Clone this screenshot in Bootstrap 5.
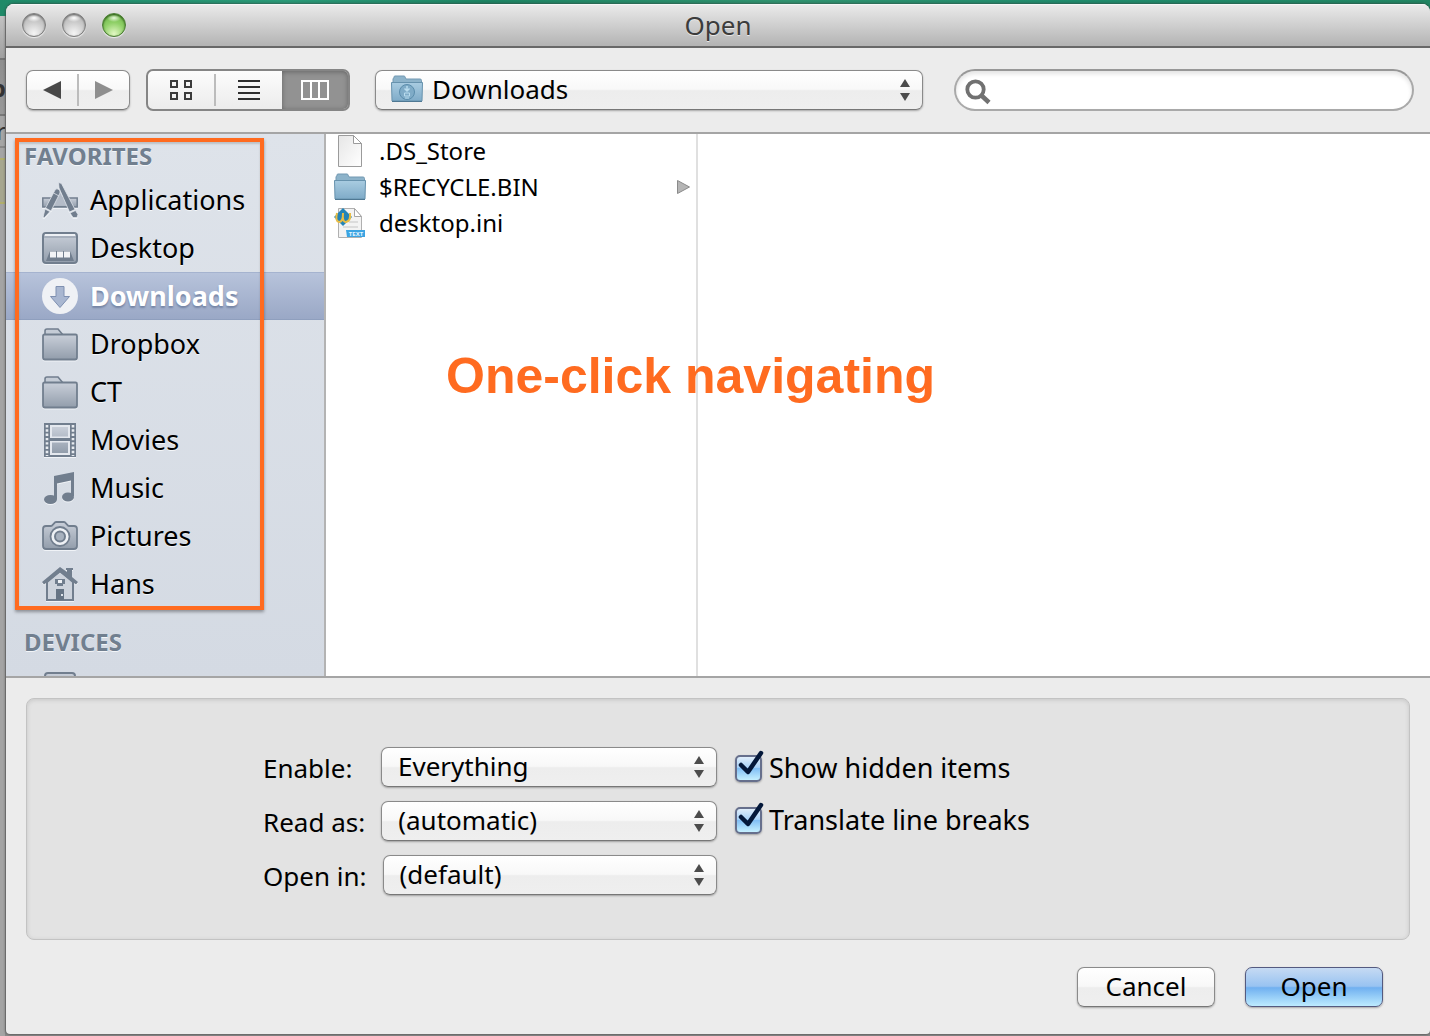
<!DOCTYPE html>
<html lang="en">
<head>
<meta charset="utf-8">
<meta name="viewport" content="width=device-width, initial-scale=1">
<title>Open</title>
<link href="https://cdn.jsdelivr.net/npm/bootstrap@5.3.0/dist/css/bootstrap.min.css" rel="stylesheet">
<style>
  body { font-family: "Noto Sans", "Open Sans", sans-serif; font-size: 26px; line-height: 36px; color: #000; background: #7b7b7b; }
  button, select, input { font-family: inherit; color: #000; }
  .desk { height: 100vh; min-height: 900px; background: linear-gradient(90deg, #1f8a68, #2a9a78 20%, #1d8463 34%, #30936f 55%, #1f8b6c 75%, #218562) top / 100% 16px no-repeat, #8c8c8c; }
  /* edge of the window behind */
  .behind { width: 6px; font-weight: 700; font-size: 24px; line-height: 36px; color: #333; margin-top: 16px; background: #a4a4a4; border-right: 1px solid #8a8a8a; }
  .behind-cap { height: 44px; background: linear-gradient(#c2c2c2, #a0a0a0); border-bottom: 2px solid #757575; }
  .behind-tab { height: 56px; background: linear-gradient(#8e8e8e, #989898); border-bottom: 2px solid #777; padding-top: 10px; }
  .behind-bar { height: 32px; background: #a5a5a5; border-bottom: 2px solid #888; line-height: 30px; font-weight: 400; }
  .behind-note { height: 46px; margin-top: 10px; background: #a6a68f; border: solid #b0ae6c; border-width: 2px 0; }
  .behind span { display: block; direction: rtl; width: 6px; }

  .dialog-win { margin: 4px 0 2px; background: #ececec; border-radius: 8px 8px 4px 4px; box-shadow: 0 0 3px #333; min-width: 0; overflow: hidden; }
  .titlebar { height: 44px; background: linear-gradient(#ebebeb, #d2d2d2 45%, #b3b3b3); border-bottom: 2px solid #686868; box-shadow: inset 0 1px #f6f6f6; color: #3c3c3c; text-shadow: 0 1px #e8e8e8; }
  .lights { left: 16px; gap: 16px; }
  .light { width: 24px; height: 24px; border-radius: 50%; border: 1px solid #7d7d7d; box-shadow: 0 1px 1px #eee, inset 0 1px 2px #666; background: radial-gradient(ellipse 7px 4px at 50% 18%, #fff, transparent), radial-gradient(circle at 50% 88%, #f5f5f5, #c8c8c8 55%, #b4b4b4); }
  .light-go { border-color: #4a7d33; box-shadow: 0 1px 1px #eee, inset 0 1px 2px #24500f; background: radial-gradient(ellipse 7px 4px at 50% 18%, #e8f8dc, transparent), radial-gradient(circle at 50% 90%, #e2f8c4, #8fd067 50%, #67b045); }

  .toolbar { height: 86px; padding: 0 16px 0 20px; border-bottom: 2px solid #a5a5a5; }
  .aqua { height: 40px; border: 1px solid #8a8a8a; border-bottom-color: #777; border-radius: 7px; background: linear-gradient(#fff, #f8f8f8 48%, #ededed 52%, #efefef); box-shadow: 0 1px 2px rgba(0,0,0,.3); }
  .nav-pair { width: 104px; margin-right: 16px; }
  .view-set { width: 204px; height: 42px; margin-right: 25px; border: 2px solid #858585; border-radius: 7px; background: linear-gradient(#fcfcfc, #ececec); }
  .plain { border: 0; background: none; padding: 0; }
  .split { width: 2px; height: 32px; background: #bcbcbc; }
  .view-set .plain { flex: 1 1 0; }
  .view-on { background: #929292; box-shadow: inset 0 1px 5px #666; border-radius: 0 5px 5px 0; }
  .pop { width: 100%; appearance: none; padding: 0 44px 2px 16px; font-size: 26px; line-height: 36px; display: block; }
  .pop-place { padding-left: 56px; }
  .pop-arrows { right: 12px; top: 8px; pointer-events: none; }
  .place-icon { left: 16px; top: 5px; pointer-events: none; }
  .place { flex: 548 1 0; margin-right: 31px; }
  .finder { flex: 460 1 0; }
  .finder input { width: 100%; height: 42px; border: 2px solid #a9a9a9; border-top-color: #979797; border-radius: 21px; padding: 0 20px 0 48px; background: #fff; box-shadow: inset 0 3px 4px #e4e4e4; display: block; }
  .finder svg { left: 10px; top: 9px; pointer-events: none; }

  .browser { flex: 1 1 0; min-height: 0; border-bottom: 2px solid #a5a5a5; background: #fff; }
  .sidebar { width: 320px; flex: none; background: linear-gradient(#dee3ea, #d4dae3); border-right: 2px solid #b3b3b3; text-shadow: 0 1px #f3f6f9; font-size: 27px; }
  .side-head { font-size: 24px; line-height: 36px; font-weight: 700; color: #717f8f; padding: 4px 0 2px 18px; margin: 0; }
  .side-head-next { margin-top: 12px; }
  .side-link { height: 48px; padding-left: 36px; gap: 12px; color: #000; text-decoration: none; }
  .side-link svg { flex: none; filter: drop-shadow(0 1px 0 #f0f3f7); }
  .side-on { background: linear-gradient(#b7c3db, #9aa8c6); border-top: 1px solid #a5b3cf; border-bottom: 1px solid #8f9fbe; color: #fff; font-weight: 700; text-shadow: 0 2px 2px #7484a4; }
  .side-on svg { filter: none; }
  .marker-box { left: 9px; top: 4px; width: 249px; height: 472px; border: 4px solid #ff6b20; box-shadow: 0 2px 3px rgba(0,0,0,.35), inset 0 2px 2px rgba(0,0,0,.15); pointer-events: none; }
  .marker-text { left: 440px; top: 212px; font: 700 50px/60px "Liberation Sans", Arial, sans-serif; color: #ff6b20; }
  .files { width: 372px; flex: none; border-right: 2px solid #e0e0e0; font-size: 24px; }
  .file-row { height: 36px; padding: 0 6px 2px 8px; gap: 13px; color: #000; text-decoration: none; }
  .file-row svg { flex: none; }

  .options { margin: 20px 20px 0; height: 242px; padding: 48px 0 0 236px; background: #e3e3e3; border: 1px solid #c3c3c3; border-radius: 8px; box-shadow: inset 0 1px 4px #c6c6c6; gap: 18px; }
  .opt-pops { width: 454px; gap: 14px; }
  .opt-pops label { min-width: 118px; padding: 2px 16px 0 0; white-space: nowrap; }
  .opt-ticks { gap: 16px; padding-top: 3px; font-size: 27px; }
  .tick { gap: 7px; height: 36px; }
  .tick input { appearance: none; width: 27px; height: 27px; margin: 0; border: 2px solid #666f8c; border-radius: 5px; background: linear-gradient(#e0eefb, #a9d2f8 45%, #82bff5 50%, #c5f0ff); box-shadow: 0 1px 2px rgba(0,0,0,.3); display: block; }
  .tick svg { left: 2px; top: -5px; pointer-events: none; }
  .foot { padding: 27px 47px 27px 0; gap: 30px; }
  .foot button { width: 138px; padding: 0 0 2px; line-height: 36px; }
  .foot .go { border-color: #545a80; background: linear-gradient(#c6daf3, #98c3f1 48%, #70b0f0 52%, #bdebff); }
</style>
<script src="https://cdn.jsdelivr.net/npm/bootstrap@5.3.0/dist/js/bootstrap.bundle.min.js"></script>
</head>
<body>
<svg width="0" height="0" class="position-absolute" aria-hidden="true">
  <defs>
    <linearGradient id="slate" x2="0" y2="1"><stop stop-color="#c9cfd9"/><stop offset="1" stop-color="#929dab"/></linearGradient>
    <linearGradient id="blue" x2="0" y2="1"><stop stop-color="#a9cce1"/><stop offset="1" stop-color="#7fabc8"/></linearGradient>
    <linearGradient id="paper" x2="1" y2="1"><stop stop-color="#e6e6e6"/><stop offset="1" stop-color="#fff"/></linearGradient>
    <symbol id="arrows" viewBox="0 0 12 24"><path d="M6 1l5 8H1zM6 23l5-8H1z" fill="#4c4c4c"/></symbol>
    <symbol id="folder" viewBox="0 0 36 34"><path d="M3 8V4q0-2 2-2h11l5 6" fill="#c5ccd6" stroke="#717e8e" stroke-width="1.6"/><path d="M1 9q0-1.500 1.500-1.500h31q1.500 0 1.500 1.500v21.500q0 2-2 2H3q-2 0-2-2z" fill="url(#slate)" stroke="#717e8e" stroke-width="1.800"/></symbol>
    <symbol id="bluefolder" viewBox="0 0 32 28"><path d="M2 7V4q0-1 1-1V2q0-1 1-1h9q1 0 1 1l1 2h14q1.500 0 1.500 1.500V10H2z" fill="#8db3ca" stroke="#7399b2"/><path d="M.5 7.500h31L31 26H1z" fill="url(#blue)" stroke="#6792ad"/><path d="M1 26.500h30" stroke="#4f7893"/></symbol>
  </defs>
</svg>

<div class="desk d-flex">
  <div class="behind flex-shrink-0 overflow-hidden" aria-hidden="true">
    <div class="behind-cap"></div>
    <div class="behind-tab"><span>p</span></div>
    <div class="behind-bar"><span>r</span></div>
    <div class="behind-note"></div>
  </div>

  <main class="dialog-win flex-grow-1 d-flex flex-column">
    <header class="titlebar position-relative d-flex align-items-center justify-content-center flex-shrink-0">
      <div class="lights position-absolute d-flex">
        <button class="light p-0" type="button" aria-label="Close"></button>
        <button class="light p-0" type="button" aria-label="Minimize"></button>
        <button class="light light-go p-0" type="button" aria-label="Zoom"></button>
      </div>
      <span>Open</span>
    </header>

    <div class="toolbar d-flex align-items-center flex-shrink-0">
      <div class="nav-pair aqua d-flex align-items-center flex-shrink-0">
        <button class="plain flex-fill h-100 d-flex align-items-center justify-content-center" type="button" aria-label="Back"><svg width="18" height="20" viewBox="0 0 18 20"><path d="M0 10L18 1v18z" fill="#484848"/></svg></button>
        <span class="split"></span>
        <button class="plain flex-fill h-100 d-flex align-items-center justify-content-center" type="button" aria-label="Forward"><svg width="18" height="20" viewBox="0 0 18 20"><path d="M18 10L0 1v18z" fill="#8e8e8e"/></svg></button>
      </div>
      <div class="view-set d-flex align-items-center flex-shrink-0">
        <button class="plain h-100 d-flex align-items-center justify-content-center" type="button" aria-label="Icons"><svg width="24" height="22" viewBox="0 0 24 22" fill="none" stroke="#3b3b3b" stroke-width="2"><path d="M2 2h6v6H2zM16 2h6v6h-6zM2 14h6v6H2zM16 14h6v6h-6z"/></svg></button>
        <span class="split"></span>
        <button class="plain h-100 d-flex align-items-center justify-content-center" type="button" aria-label="List"><svg width="22" height="20" viewBox="0 0 22 20" stroke="#2e2e2e" stroke-width="2"><path d="M0 1h22M0 7h22M0 13h22M0 19h22"/></svg></button>
        <button class="plain view-on h-100 d-flex align-items-center justify-content-center" type="button" aria-label="Columns"><svg width="28" height="22" viewBox="0 0 28 22" fill="none" stroke="#fff" stroke-width="2"><path d="M1 2h26v18H1zM10 2v18M18 2v18"/></svg></button>
      </div>
      <div class="place position-relative">
        <select class="aqua pop pop-place" aria-label="Folder"><option>Downloads</option></select>
        <svg class="place-icon position-absolute" width="32" height="28" viewBox="0 0 32 28"><use href="#bluefolder"/><circle cx="16" cy="17" r="7.500" fill="#7fabc7" stroke="#5b8dac"/><path d="M16 11v4M13.500 13.500L16 16l2.500-2.500" stroke="#b9dcee" fill="none" stroke-width="1.500"/><path d="M13.500 18h5v3h-5zM14 23h4" stroke="#b9dcee" fill="none"/></svg>
        <svg class="pop-arrows position-absolute" width="12" height="24"><use href="#arrows"/></svg>
      </div>
      <div class="finder position-relative">
        <input type="search" aria-label="Search">
        <svg class="position-absolute" width="28" height="28" viewBox="0 0 28 28" fill="none" stroke="#717171"><circle cx="11.500" cy="11.500" r="8.200" stroke-width="3.800"/><path d="M17.500 17.500l7.500 7" stroke-width="4.500"/></svg>
      </div>
    </div>

    <div class="browser position-relative d-flex overflow-hidden">
      <nav class="sidebar overflow-hidden">
        <h2 class="side-head">FAVORITES</h2>
        <a class="side-link d-flex align-items-center" href="#"><svg width="36" height="36" viewBox="0 0 36 36"><path d="M.8 16h34.400v9H.8z" fill="url(#slate)" stroke="#717e8e" stroke-width="1.500"/><path d="M17.500 9L9 25.500h17z" fill="#b4bcc8"/><path d="M11 24.700h16" stroke="#717e8e" stroke-width="1.500"/><g stroke="#dee3ea" stroke-width=".8" fill="#717e8e"><path d="M12.500 9q.8-3 3.500-2t2 4L9 29l-5.500-3z"/><path d="M3 27l5 2.600-5.500 5.900H1z"/><path d="M11.500 11l5.500 3" fill="none"/><path d="M16.500.500l3 1L33 27.500l-5.500 2.500L17 6z"/><path d="M28 31l5.500-2.500 2.500 4-1 3h-4z"/></g></svg><span>Applications</span></a>
        <a class="side-link d-flex align-items-center" href="#"><svg width="36" height="34" viewBox="0 0 36 34"><rect x="1" y="2" width="34" height="30" rx="3" fill="url(#slate)" stroke="#717e8e" stroke-width="2"/><path d="M3 4h30" stroke="#edf0f4" stroke-width="2"/><path d="M2 6h32" stroke="#8a95a4"/><path d="M8 20h20l4 10H4z" fill="#717e8e"/><path d="M8 20.500h6v6H8zM15 20.500h6v6h-6zM22 20.500h6v6h-6z" fill="#f2f4f7"/></svg><span>Desktop</span></a>
        <a class="side-link side-on d-flex align-items-center" href="#" aria-current="page"><svg width="36" height="36" viewBox="0 0 36 36"><circle cx="18" cy="18" r="18" fill="#eff1f5"/><path d="M14 8.500h8v10h5.500L18 29.500 8.500 18.500H14z" fill="#a9b7d1" stroke="#7f90b1"/></svg><span>Downloads</span></a>
        <a class="side-link d-flex align-items-center" href="#"><svg width="36" height="34"><use href="#folder"/></svg><span>Dropbox</span></a>
        <a class="side-link d-flex align-items-center" href="#"><svg width="36" height="34"><use href="#folder"/></svg><span>CT</span></a>
        <a class="side-link d-flex align-items-center" href="#"><svg width="36" height="36" viewBox="0 0 36 36"><path d="M2 1h32v34H2z" fill="#717e8e"/><path d="M8 3h20v13H8zM8 19h20v14H8z" fill="#e4e8ee"/><path d="M10 5h16v9.500H10zM10 20.500h16V31H10z" fill="url(#slate)"/><path d="M5 3v31M31 3v31" stroke="#e7ebf0" stroke-width="2.600" stroke-dasharray="2.400 1.900"/></svg><span>Movies</span></a>
        <a class="side-link d-flex align-items-center" href="#"><svg width="36" height="36" viewBox="0 0 36 36" fill="#717e8e"><path d="M12 6l20-4v24h-3V10.500L15 13.500V29h-3z"/><ellipse cx="8.500" cy="29.500" rx="6.500" ry="4.500"/><ellipse cx="26" cy="27" rx="6" ry="4.500"/></svg><span>Music</span></a>
        <a class="side-link d-flex align-items-center" href="#"><svg width="36" height="30" viewBox="0 0 36 30"><path d="M4 5h5q1 0 2-1.500l1-1Q13 1 14 1h8q1 0 2 1.500l1 1Q26 5 27 5h5q3 0 3 3v17q0 3-3 3H4q-3 0-3-3V8q0-3 3-3z" fill="url(#slate)" stroke="#717e8e" stroke-width="1.800"/><circle cx="18" cy="15.500" r="9.500" fill="#eef1f5" stroke="#717e8e" stroke-width="1.800"/><circle cx="18" cy="15.500" r="5" fill="#a7b1be" stroke="#717e8e" stroke-width="2"/></svg><span>Pictures</span></a>
        <a class="side-link d-flex align-items-center" href="#"><svg width="36" height="36" viewBox="0 0 36 36"><path d="M5 16L18 5l13 11v18H5z" fill="#cdd3dc" stroke="#717e8e" stroke-width="2"/><path d="M18 1l7 5V4h-1V2h7v2h-1v7l6 5-2 2.500L18 6.500 2 18.500 0 16z" fill="#717e8e"/><path d="M13 13h10v5h-2v2h-6v-2h-2z" fill="#717e8e"/><path d="M16 14h4v3h-4z" fill="#eef1f5"/><path d="M14 23h8v11h-8z" fill="#667484"/><path d="M19 28h2v2h-2z" fill="#dfe4ea"/></svg><span>Hans</span></a>
        <h2 class="side-head side-head-next">DEVICES</h2>
        <a class="side-link d-flex align-items-center" href="#" aria-label="Device"><svg width="36" height="28" viewBox="0 0 36 28"><rect x="3" y="1" width="30" height="26" rx="3" fill="url(#slate)" stroke="#717e8e" stroke-width="2"/></svg></a>
      </nav>

      <div class="files">
        <a class="file-row d-flex align-items-center" href="#"><svg width="32" height="32" viewBox="0 0 32 32"><path d="M4.500.500h15l8 8v23h-23z" fill="url(#paper)" stroke="#9b9b9b"/><path d="M19.500.500v8h8z" fill="#fff" stroke="#9b9b9b"/></svg><span>.DS_Store</span></a>
        <a class="file-row d-flex align-items-center" href="#"><svg width="32" height="28"><use href="#bluefolder"/></svg><span class="flex-grow-1">$RECYCLE.BIN</span><svg width="13" height="14" viewBox="0 0 13 14"><path d="M.5.500v13L12.500 7z" fill="#b5b5b5" stroke="#8a8a8a"/></svg></a>
        <a class="file-row d-flex align-items-center" href="#"><svg width="32" height="32" viewBox="0 0 32 32"><path d="M4.500 1.500h16l7 8v21h-23z" fill="#f3f3f3" stroke="#b0b0b0"/><path d="M20.500 1.500v8h7z" fill="#fff" stroke="#a5a5a5"/><path d="M15 15h9M9 20h15" stroke="#dcdcdc" stroke-width="2"/><path d="M9 1l9 9-9 9-9-9z" fill="#2384b8"/><path d="M3 6q-2 8 2 9 4 0 4-9-1 9 3 9 5-1 4-9" fill="none" stroke="#e9bd45" stroke-width="2"/><path d="M12 23h19v7H13z" fill="#3ba4e2"/><text x="22" y="29" text-anchor="middle" font-size="6" font-weight="700" fill="#e3f5ff">TEXT</text></svg><span>desktop.ini</span></a>
      </div>
      <div class="flex-grow-1"></div>
      <div class="marker-box position-absolute"></div>
      <div class="marker-text position-absolute text-nowrap">One-click navigating</div>
    </div>

    <section class="options d-flex flex-shrink-0">
      <div class="opt-pops d-flex flex-column">
        <div class="d-flex align-items-center"><label for="enable">Enable:</label><div class="position-relative flex-grow-1"><select id="enable" class="aqua pop"><option>Everything</option></select><svg class="pop-arrows position-absolute" width="12" height="24"><use href="#arrows"/></svg></div></div>
        <div class="d-flex align-items-center"><label for="readas">Read as:</label><div class="position-relative flex-grow-1"><select id="readas" class="aqua pop"><option>(automatic)</option></select><svg class="pop-arrows position-absolute" width="12" height="24"><use href="#arrows"/></svg></div></div>
        <div class="d-flex align-items-center"><label for="openin">Open in:</label><div class="position-relative flex-grow-1"><select id="openin" class="aqua pop"><option>(default)</option></select><svg class="pop-arrows position-absolute" width="12" height="24"><use href="#arrows"/></svg></div></div>
      </div>
      <div class="opt-ticks d-flex flex-column">
        <div class="tick d-flex align-items-center"><div class="position-relative"><input type="checkbox" id="hidden-items" checked><svg class="position-absolute" width="28" height="28" viewBox="0 0 28 28" fill="none" stroke="#04183a" stroke-width="4.500" stroke-linecap="round"><path d="M4 15l7 7L24 3" stroke-linejoin="round"/></svg></div><label for="hidden-items">Show hidden items</label></div>
        <div class="tick d-flex align-items-center"><div class="position-relative"><input type="checkbox" id="line-breaks" checked><svg class="position-absolute" width="28" height="28" viewBox="0 0 28 28" fill="none" stroke="#04183a" stroke-width="4.500" stroke-linecap="round"><path d="M4 15l7 7L24 3" stroke-linejoin="round"/></svg></div><label for="line-breaks">Translate line breaks</label></div>
      </div>
    </section>

    <footer class="foot d-flex justify-content-end flex-shrink-0">
      <button class="aqua" type="button">Cancel</button>
      <button class="aqua go" type="submit">Open</button>
    </footer>
  </main>
</div>
</body>
</html>
